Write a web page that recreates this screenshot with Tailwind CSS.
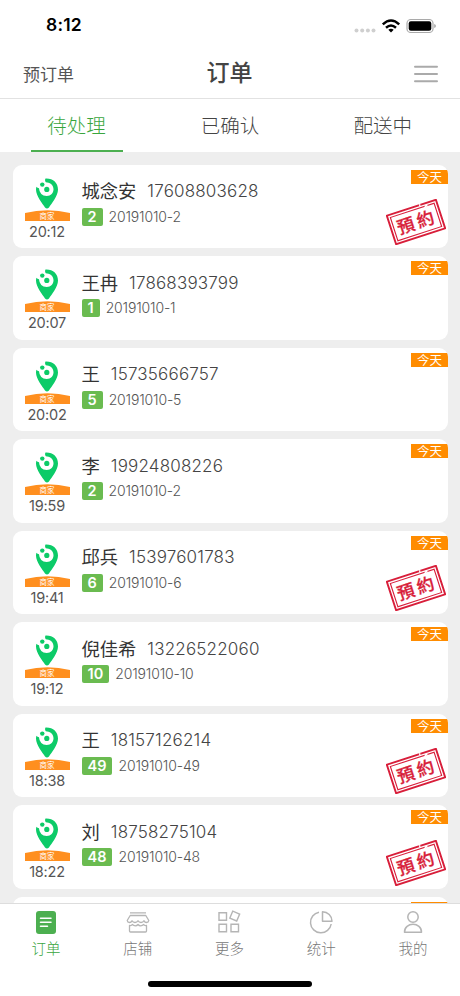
<!DOCTYPE html>
<html lang="zh-CN">
<head>
    <meta charset="UTF-8">
    <meta name="viewport" content="width=device-width, initial-scale=1.0">
    <title>订单</title>
    <script src="https://cdn.jsdelivr.net/npm/@tailwindcss/browser@4"></script>
</head>
<body class="bg-[#eeeeee] font-['Noto_Sans_CJK_SC',sans-serif]">
    <!-- Shared icons -->
    <svg class="hidden">
        <symbol id="pin" viewBox="0 0 24 31">
            <path d="M10.500 .6C18 .2 23 5 23 11.500C23 18 16.500 25.500 14 29.500Q12 31.500 10 29.500C7.500 25.500 1 18 1 11.500Q1 10 1.500 8.800Q2.300 10 4 10.200Q4.500 17.500 11.700 18C16 18 18.500 15 18.500 11.300C18.500 6.500 14.500 4.500 10.800 4.200Q9.500 2.500 10.500 .6Z" fill="#0ccb68"/>
            <circle cx="7.300" cy="6.600" r="2.200" fill="#0ccb68"/>
            <circle cx="11.800" cy="11.400" r="2.600" fill="#0ccb68"/>
        </symbol>
        <symbol id="stamp" viewBox="0 0 60 46">
            <g transform="rotate(-18 30 23)" fill="none" stroke="#d81e3a">
                <rect x="4.200" y="8" width="51.600" height="30" stroke-width="1.900"/>
                <rect x="7" y="10.800" width="46" height="24.400" stroke-width="1.100"/>
                <path d="M38 8h1.500M43 10.800h3" stroke="#fff" stroke-width="1.800"/>
                <text x="31" y="29.700" text-anchor="middle" font-family="Noto Sans CJK TC, sans-serif" font-size="17.500" font-weight="500" letter-spacing="3" fill="#d81e3a" stroke="#d81e3a" stroke-width=".3">預約</text>
            </g>
        </symbol>
    </svg>

    <div class="flex h-[996px] w-[460px] flex-col overflow-hidden">
        <!-- Status bar -->
        <div class="flex h-[50px] shrink-0 items-center justify-between bg-white pt-px pr-6 pl-[46px]">
            <span class="font-['Inter',sans-serif] text-[17.5px] font-semibold tracking-[0.2px] text-black">8:12</span>
            <svg class="h-5 w-[82px]" viewBox="0 0 82 20">
                <g fill="#cfcfcf">
                    <circle cx="2.500" cy="14.500" r="2"/><circle cx="8.200" cy="14.500" r="2"/><circle cx="13.900" cy="14.500" r="2"/><circle cx="19.500" cy="14.500" r="2"/>
                </g>
                <g fill="none" stroke="#000" stroke-width="2.500">
                    <path d="M28.800 8.300Q37 .6 45.200 8.300M32 11.700Q37 7.300 42 11.700"/>
                </g>
                <path d="M34.300 13.700Q37 11.800 39.700 13.700L37 16.600Z"/>
                <rect x="53" y="3.500" width="26" height="13" rx="3.800" fill="#fff" stroke="#aaa" stroke-width="1.200"/>
                <rect x="54.700" y="5.200" width="22.600" height="9.600" rx="2.200"/>
                <path d="M80.300 8v4q1.500-.5 1.500-2t-1.500-2Z" fill="#999"/>
            </svg>
        </div>

        <!-- Title bar -->
        <header class="grid h-[49px] shrink-0 grid-cols-3 items-center border-b border-[#e2e2e2] bg-white pr-[22px] pl-[23px]">
            <span class="text-[17px] leading-6 text-[#555]">预订单</span>
            <h1 class="pr-[2px] pb-[6px] text-center text-[23px] leading-8 font-medium text-[#444]">订单</h1>
            <svg class="h-[18px] w-6 justify-self-end" viewBox="0 0 24 18" stroke="#aaa" stroke-width="2" stroke-linecap="round">
                <path d="M1 1.700h22M1 9h22M1 16.300h22"/>
            </svg>
        </header>

        <!-- Tabs -->
        <nav class="grid h-[53px] shrink-0 grid-cols-3 bg-white text-center text-[19.5px] leading-[51px] font-light text-[#444]">
            <a class="ml-[31px] h-[53px] w-[92px] border-b-2 border-[#4caf50] pr-px text-[#3aa63e]">待处理</a>
            <a>已确认</a>
            <a class="pr-px">配送中</a>
        </nav>

        <!-- Order list -->
        <main id="orderList" class="flex flex-1 flex-col gap-2 overflow-hidden pt-[12.7px] pr-3 pl-[13px]"></main>

        <!-- Bottom navigation -->
        <footer class="h-[93px] shrink-0 border-t border-[#ddd] bg-white">
            <div class="grid h-[58px] grid-cols-5 pr-px text-[14.5px] leading-5 font-light text-[#777]">
                <a class="flex flex-col items-center gap-[2px] pt-[6px] text-[#3aa63e]">
                    <svg class="size-[26px]" viewBox="0 0 26 26"><rect x="3" y="1" width="20" height="23" rx="3" fill="#4caf50"/><path d="M7.500 8.200h10.500M7.500 12.200h10.500M7.500 16.300h7" stroke="#fff" stroke-width="1.500" stroke-linecap="round"/></svg>
                    <span>订单</span>
                </a>
                <a class="flex flex-col items-center gap-[2px] pt-[6px]">
                    <svg class="size-[26px]" viewBox="0 0 26 26" fill="none" stroke="#b5b5b5" stroke-width="1.300" stroke-linejoin="round">
                        <path d="M5 2.800h16M5.200 5.500h15.600l3 5q-.3 2-2.300 2-1.700 0-2.500-1.800-1 1.800-3 1.800t-3-1.800q-1 1.800-3 1.800t-3-1.800q-.8 1.800-2.500 1.800-2 0-2.300-2ZM4.500 15.500v5.500q0 1 1 1h15q1 0 1-1v-5.500q-2 .5-2.800-1-1.300 1.300-3 1.300t-2.700-1.300q-1 1.300-2.700 1.300t-3-1.300q-.8 1.500-2.800 1Z"/>
                    </svg>
                    <span>店铺</span>
                </a>
                <a class="flex flex-col items-center gap-[2px] pt-[6px]">
                    <svg class="size-[26px]" viewBox="0 0 26 26" fill="none" stroke="#b5b5b5" stroke-width="1.400">
                        <path d="M3 2.700h7.500v7.500H3ZM3 14.200h7.500v7.500H3ZM15 14.200h7.500v7.500H15Z"/>
                        <rect x="15" y="2.300" width="7.500" height="7.500" transform="rotate(23 18.700 6)"/>
                    </svg>
                    <span>更多</span>
                </a>
                <a class="flex flex-col items-center gap-[2px] pt-[6px]">
                    <svg class="size-[26px]" viewBox="0 0 26 26" fill="none" stroke="#b5b5b5" stroke-width="1.500" stroke-linejoin="round">
                        <path d="M11 2.200A10.400 10.400 0 1 0 23.200 14M14.500 1.700V11.200H24A9.500 9.500 0 0 0 14.500 1.700Z"/>
                    </svg>
                    <span>统计</span>
                </a>
                <a class="flex flex-col items-center gap-[2px] pt-[6px]">
                    <svg class="size-[26px]" viewBox="0 0 26 26" fill="none" stroke="#b5b5b5" stroke-width="1.500" stroke-linejoin="round">
                        <circle cx="13" cy="7" r="5.200"/><path d="M4.500 22.300C4.300 11.700 21.700 11.700 21.500 22.300Z"/>
                    </svg>
                    <span>我的</span>
                </a>
            </div>
            <div class="mx-auto mt-[19px] h-[6px] w-[164px] rounded-full bg-black"></div>
        </footer>
    </div>

    <script>
        const orders = [
            { name: '城念安', phone: '17608803628', seq: 2, time: '20:12', booked: true },
            { name: '王冉', phone: '17868393799', seq: 1, time: '20:07' },
            { name: '王', phone: '15735666757', seq: 5, time: '20:02' },
            { name: '李', phone: '19924808226', seq: 2, time: '19:59' },
            { name: '邱兵', phone: '15397601783', seq: 6, time: '19:41', booked: true },
            { name: '倪佳希', phone: '13226522060', seq: 10, time: '19:12' },
            { name: '王', phone: '18157126214', seq: 49, time: '18:38', booked: true },
            { name: '刘', phone: '18758275104', seq: 48, time: '18:22', booked: true }
        ];

        const stamp = '<svg class="absolute right-[2px] bottom-[3px] h-[46px] w-[60px]"><use href="#stamp"/></svg>';

        const card = (o) => `
            <article class="relative flex h-[83.5px] shrink-0 overflow-hidden rounded-[9px] bg-white">
                <div class="ml-[11.5px] flex w-[45px] flex-col items-center pt-[13px]">
                    <svg class="h-[31px] w-6"><use href="#pin"/></svg>
                    <div class="relative mt-px h-[11px] w-[45px]">
                        <svg class="absolute inset-0 h-[11px] w-[45px]" viewBox="0 0 45 11"><path d="M0 3Q22.500-2.500 45 3V11H0Z" fill="#ff8f1f"/></svg>
                        <div class="relative text-center text-[7.5px] leading-[12px] text-white">商家</div>
                    </div>
                    <span class="pt-px font-['Inter',sans-serif] text-[14.5px] leading-[20px] tracking-[-0.2px] text-[#555]">${o.time}</span>
                </div>
                <div class="ml-[12px] pt-[14px]">
                    <div class="flex h-[25px] items-center">
                        <span class="text-[18.3px] text-[#333]">${o.name}</span>
                        <span class="ml-[11px] pt-[2px] font-['Inter',sans-serif] text-[17px] font-light tracking-[0.18px] text-[#444]">${o.phone}</span>
                    </div>
                    <div class="mt-[4px] flex h-[18px] items-center">
                        <span class="h-[18px] rounded-[2px] bg-[#6abb50] px-[6px] font-['Inter',sans-serif] text-[14.5px] leading-[18px] font-semibold text-white">${o.seq}</span>
                        <span class="ml-[6px] font-['Inter',sans-serif] text-[14px] leading-[18px] font-light tracking-[-0.15px] text-[#555]">20191010-${o.seq}</span>
                    </div>
                </div>
                <div class="absolute top-[5px] right-0 h-[14px] w-[37px] bg-[#ff8c00] text-center text-[12.5px] leading-[14px] text-white">今天</div>
                ${o.booked ? stamp : ''}
            </article>`;

        // The next card is partly under the bottom bar
        const nextCard = `
            <article class="relative h-[83.5px] shrink-0 overflow-hidden rounded-[9px] bg-white">
                <div class="absolute top-[5px] right-0 h-[14px] w-[37px] bg-[#ff8c00]"></div>
            </article>`;

        document.getElementById('orderList').innerHTML = orders.map(card).join('') + nextCard;
    </script>
</body>
</html>
